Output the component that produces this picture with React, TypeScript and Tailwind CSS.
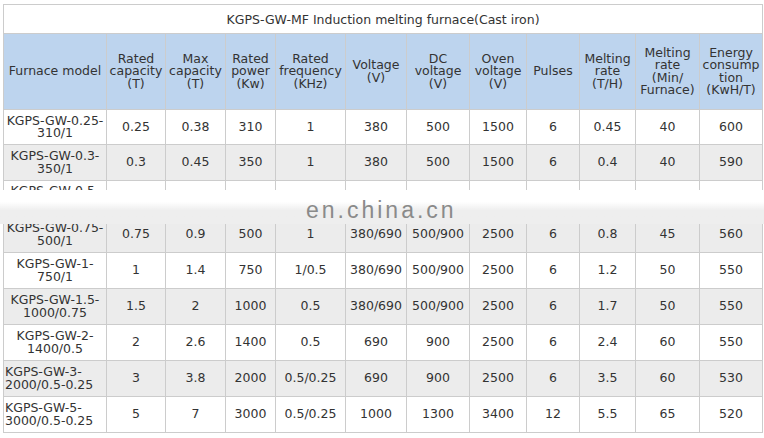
const headers: string[][] = [
  ["Furnace model"],
  ["Rated", "capacity", "(T)"],
  ["Max", "capacity", "(T)"],
  ["Rated", "power", "(Kw)"],
  ["Rated", "frequency", "(KHz)"],
  ["Voltage", "(V)"],
  ["DC", "voltage", "(V)"],
  ["Oven", "voltage", "(V)"],
  ["Pulses"],
  ["Melting", "rate", "(T/H)"],
  ["Melting", "rate", "(Min/", "Furnace)"],
  ["Energy", "consump", "tion", "(KwH/T)"],
];

const widths = [103, 59, 60, 50, 70, 61, 63, 57, 53, 56, 64, 63];

type Row = { model: [string, string]; left?: boolean; values: string[] };

// the 0.5 row sits under the site watermark, only the top of its model name shows
const rows: Row[] = [
  { model: ["KGPS-GW-0.25-", "310/1"], values: ["0.25", "0.38", "310", "1", "380", "500", "1500", "6", "0.45", "40", "600"] },
  { model: ["KGPS-GW-0.3-", "350/1"], values: ["0.3", "0.45", "350", "1", "380", "500", "1500", "6", "0.4", "40", "590"] },
  { model: ["KGPS-GW-0.5-", ""], values: ["", "", "", "", "", "", "", "", "", "", ""] },
  { model: ["KGPS-GW-0.75-", "500/1"], values: ["0.75", "0.9", "500", "1", "380/690", "500/900", "2500", "6", "0.8", "45", "560"] },
  { model: ["KGPS-GW-1-", "750/1"], values: ["1", "1.4", "750", "1/0.5", "380/690", "500/900", "2500", "6", "1.2", "50", "550"] },
  { model: ["KGPS-GW-1.5-", "1000/0.75"], values: ["1.5", "2", "1000", "0.5", "380/690", "500/900", "2500", "6", "1.7", "50", "550"] },
  { model: ["KGPS-GW-2-", "1400/0.5"], values: ["2", "2.6", "1400", "0.5", "690", "900", "2500", "6", "2.4", "60", "550"] },
  { model: ["KGPS-GW-3-", "2000/0.5-0.25"], left: true, values: ["3", "3.8", "2000", "0.5/0.25", "690", "900", "2500", "6", "3.5", "60", "530"] },
  { model: ["KGPS-GW-5-", "3000/0.5-0.25"], left: true, values: ["5", "7", "3000", "0.5/0.25", "1000", "1300", "3400", "12", "5.5", "65", "520"] },
];

export default function App() {
  return (
    <div className="w-[764px] h-[438px] bg-white pl-[3px] pt-[4px] font-['DejaVu_Sans',Verdana,sans-serif] text-[12.5px] text-[#333]">
      <div className="relative w-[760px]">
        <table className="table-fixed border-collapse w-[760px]">
          <colgroup>
            {widths.map((w, i) => (
              <col key={i} style={{ width: w }} />
            ))}
          </colgroup>
          <tbody>
            <tr className="h-[29px]">
              <td colSpan={12} className="border border-[#cccccc] text-center bg-white pt-[2px]">
                KGPS-GW-MF Induction melting furnace(Cast iron)
              </td>
            </tr>
            <tr className="h-[76px] bg-[#bdd4ee]">
              {headers.map((h, i) => (
                <td key={i} className="border border-[#cccccc] text-center align-middle leading-[12.5px] p-0">
                  {h.map((line, j) => (
                    <div key={j}>{line}</div>
                  ))}
                </td>
              ))}
            </tr>
            {rows.map((r, i) => (
              <tr key={i} className={`${i === 0 ? "h-[35px]" : "h-[36px]"} ${i % 2 === 1 ? "bg-[#ececec]" : "bg-white"}`}>
                <td className={`border border-[#cccccc] leading-[12.5px] px-[1px] whitespace-nowrap ${r.left ? "text-left" : "text-center"} ${i === 2 ? "align-top pt-[4px]" : ""}`}>
                  <div>{r.model[0]}</div>
                  {r.model[1] && <div>{r.model[1]}</div>}
                </td>
                {r.values.map((v, j) => (
                  <td key={j} className="border border-[#cccccc] text-center p-0">
                    {v}
                  </td>
                ))}
              </tr>
            ))}
          </tbody>
        </table>

        {/* site watermark band */}
        <div className="absolute left-[-3px] top-[186px] w-[764px] h-[34px] bg-linear-to-b from-white from-35% to-[#eeeeee] to-60%">
          <div className="absolute left-[306px] top-[9px] font-['Liberation_Sans',Arial,sans-serif] text-[23px] leading-[23px] tracking-[3px] text-[#8a8a8a]">
            en.china.cn
          </div>
        </div>
      </div>
    </div>
  );
}
